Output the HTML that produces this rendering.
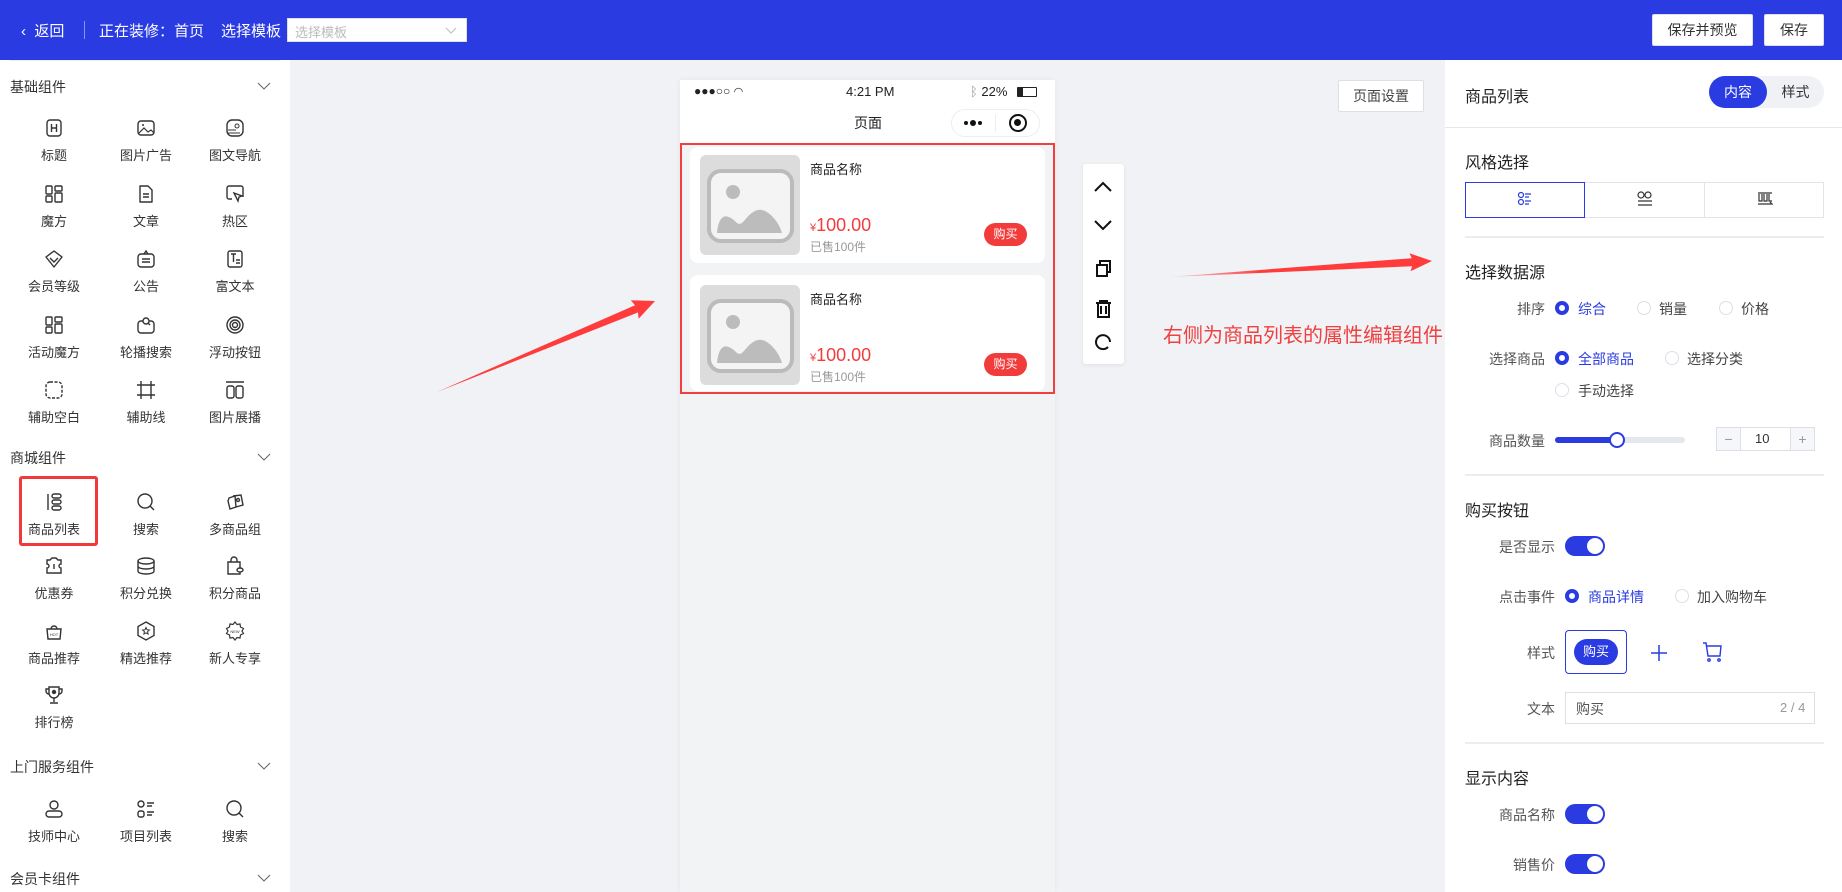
<!DOCTYPE html>
<html><head><meta charset="utf-8">
<style>
*{box-sizing:border-box;margin:0;padding:0}
body{width:1842px;height:892px;overflow:hidden;position:relative;background:#f0f2f5;font-family:"Liberation Sans","Noto Sans CJK SC",sans-serif;color:#333;font-size:14px}
.a{position:absolute}
.hdr{left:0;top:0;width:1842px;height:60px;background:#2a3be2;color:#fff}
.btn{background:#fff;border:1px solid #dcdfe6;border-radius:2px;color:#333;font-size:14px;text-align:center}
.side{left:0;top:60px;width:290px;height:832px;background:#fff}
.it{width:90px;text-align:center;font-size:13px;color:#333}
.it svg{display:block;margin:0 auto 7px}
.sec{left:10px;font-size:14px;color:#333}
.chev{left:257px;width:14px;height:8px}
.right{left:1445px;top:60px;width:397px;height:832px;background:#fff}
.lbl{font-size:14px;color:#555;text-align:right;width:90px}
.rad{width:14px;height:14px;border-radius:50%;border:1px solid #dcdfe6;background:#fff}
.rad.on{border:4px solid #2a3be2}
.tg{width:40px;height:20px;border-radius:10px;background:#2a3be2}
.tg:after{content:"";position:absolute;right:2px;top:2px;width:16px;height:16px;border-radius:50%;background:#fff}
.hr{height:2px;background:#ebedf0;left:1465px;width:359px}
.h3{font-size:16px;color:#222;left:1465px}
</style></head><body>
<div class="a hdr">
 <div class="a" style="left:21px;top:20px;font-size:15px">&#x2039;&nbsp; 返回</div>
 <div class="a" style="left:84px;top:21px;width:1px;height:18px;background:#8a95ee"></div>
 <div class="a" style="left:99px;top:20px;font-size:15px">正在装修：首页</div>
 <div class="a" style="left:221px;top:20px;font-size:15px">选择模板</div>
 <div class="a" style="left:287px;top:18px;width:180px;height:24px;background:#fff;border:1px solid #dcdfe6"><span class="a" style="left:7px;top:3px;font-size:13px;color:#bbb">选择模板</span><svg class="a" style="left:157px;top:8px" width="12" height="8"><path d="M1 1l5 5 5-5" stroke="#bbb" fill="none"/></svg></div>
 <div class="a btn" style="left:1652px;top:14px;width:101px;height:32px;line-height:30px">保存并预览</div>
 <div class="a btn" style="left:1764px;top:14px;width:60px;height:32px;line-height:30px">保存</div>
</div>

<div class="a side"></div>
<div class="a" style="left:10px;top:60px;width:270px;height:1px;background:#eee"></div>
<div class="a sec" style="top:77px">基础组件</div>
<svg class="a chev" style="top:82px" width="14" height="8"><path d="M1 1l6 6 6-6" stroke="#666" fill="none"/></svg>
<div class="a sec" style="top:448px">商城组件</div>
<svg class="a chev" style="top:453px" width="14" height="8"><path d="M1 1l6 6 6-6" stroke="#666" fill="none"/></svg>
<div class="a sec" style="top:757px">上门服务组件</div>
<svg class="a chev" style="top:762px" width="14" height="8"><path d="M1 1l6 6 6-6" stroke="#666" fill="none"/></svg>
<div class="a sec" style="top:869px">会员卡组件</div>
<svg class="a chev" style="top:874px" width="14" height="8"><path d="M1 1l6 6 6-6" stroke="#666" fill="none"/></svg>

<div class="a it" style="left:9px;top:118px"><svg width="20" height="20"><rect x="3" y="2" width="14" height="16" rx="3" stroke="#333" fill="none" stroke-width="1.4"/><path d="M7.5 6v8M12.5 6v8M7.5 10h5" stroke="#333" stroke-width="1.4"/></svg>标题</div>
<div class="a it" style="left:101px;top:118px"><svg width="20" height="20"><rect x="2" y="3" width="16" height="14" rx="3" stroke="#333" fill="none" stroke-width="1.4"/><path d="M3 15l5-5 4 4 3-2 3 3" stroke="#333" fill="none" stroke-width="1.2"/><circle cx="7" cy="7" r="1" fill="#333"/></svg>图片广告</div>
<div class="a it" style="left:190px;top:118px"><svg width="20" height="20"><rect x="2" y="2" width="16" height="16" rx="5" stroke="#333" fill="none" stroke-width="1.4"/><circle cx="12" cy="8" r="2" stroke="#333" fill="none"/><path d="M3 12h8M3 15h12" stroke="#333"/></svg>图文导航</div>
<div class="a it" style="left:9px;top:184px"><svg width="20" height="20" fill="none" stroke="#333" stroke-width="1.4"><rect x="2" y="2" width="6" height="8" rx="1"/><rect x="11" y="2" width="7" height="5" rx="1"/><rect x="2" y="12" width="6" height="6" rx="1"/><rect x="11" y="9" width="7" height="9" rx="1"/></svg>魔方</div>
<div class="a it" style="left:101px;top:184px"><svg width="20" height="20" fill="none" stroke="#333" stroke-width="1.4"><path d="M4 2h8l4 4v12H4z" stroke-linejoin="round"/><path d="M7 10h6M7 13h6"/></svg>文章</div>
<div class="a it" style="left:190px;top:184px"><svg width="20" height="20" fill="none" stroke="#333" stroke-width="1.4"><path d="M7 15H4a2 2 0 01-2-2V4a2 2 0 012-2h12a2 2 0 012 2v9"/><path d="M9 9l8 3-3 1-1 4z"/></svg>热区</div>
<div class="a it" style="left:9px;top:249px"><svg width="20" height="20" fill="none" stroke="#333" stroke-width="1.4"><path d="M10 2l8 6-8 10-8-10z" stroke-linejoin="round"/><path d="M6 9l4 4 4-4"/></svg>会员等级</div>
<div class="a it" style="left:101px;top:249px"><svg width="20" height="20" fill="none" stroke="#333" stroke-width="1.4"><rect x="2" y="5" width="16" height="13" rx="3"/><path d="M8 5l2-3 2 3M6 10h8M6 13h8"/></svg>公告</div>
<div class="a it" style="left:190px;top:249px"><svg width="20" height="20" fill="none" stroke="#333" stroke-width="1.4"><rect x="3" y="2" width="14" height="16" rx="2"/><path d="M6 5h5M8.5 5v8M11 11h4M11 14h4"/></svg>富文本</div>
<div class="a it" style="left:9px;top:315px"><svg width="20" height="20" fill="none" stroke="#333" stroke-width="1.4"><rect x="2" y="2" width="6" height="8" rx="1"/><rect x="11" y="2" width="7" height="5" rx="1"/><rect x="2" y="12" width="6" height="6" rx="1"/><rect x="11" y="9" width="7" height="9" rx="1"/></svg>活动魔方</div>
<div class="a it" style="left:101px;top:315px"><svg width="20" height="20" fill="none" stroke="#333" stroke-width="1.4"><rect x="2" y="6" width="16" height="12" rx="3"/><circle cx="10" cy="6" r="3" fill="#fff"/><path d="M12 8l2 2"/></svg>轮播搜索</div>
<div class="a it" style="left:190px;top:315px"><svg width="20" height="20" fill="none" stroke="#333" stroke-width="1.4"><circle cx="10" cy="10" r="8"/><circle cx="10" cy="10" r="5"/><circle cx="10" cy="10" r="2.5"/></svg>浮动按钮</div>
<div class="a it" style="left:9px;top:380px"><svg width="20" height="20" fill="none" stroke="#333" stroke-width="1.4" stroke-dasharray="3 1.5"><rect x="2" y="2" width="16" height="16" rx="4"/></svg>辅助空白</div>
<div class="a it" style="left:101px;top:380px"><svg width="20" height="20" fill="none" stroke="#333" stroke-width="1.4"><path d="M5 1v18M15 1v18M1 5h18M1 15h18"/></svg>辅助线</div>
<div class="a it" style="left:190px;top:380px"><svg width="20" height="20" fill="none" stroke="#333" stroke-width="1.4"><path d="M1 2h18"/><rect x="2" y="6" width="7" height="12" rx="2"/><rect x="11" y="6" width="7" height="12" rx="2"/></svg>图片展播</div>

<div class="a" style="left:19px;top:476px;width:79px;height:70px;border:3px solid #f03a3a;border-radius:3px"></div>
<div class="a it" style="left:9px;top:492px"><svg width="20" height="20" fill="none" stroke="#333" stroke-width="1.4"><path d="M4 2v16"/><rect x="8" y="2" width="9" height="4" rx="2"/><rect x="8" y="8" width="9" height="4" rx="2"/><rect x="8" y="14" width="9" height="4" rx="2"/></svg>商品列表</div>
<div class="a it" style="left:101px;top:492px"><svg width="20" height="20" fill="none" stroke="#333" stroke-width="1.4"><circle cx="9" cy="9" r="7"/><path d="M14 14l4 4"/></svg>搜索</div>
<div class="a it" style="left:190px;top:492px"><svg width="20" height="20" fill="none" stroke="#333" stroke-width="1.4"><path d="M4 6l6-2 1 11-6 2-2-8z"/><path d="M8 4l8-1 2 10-7 2"/><circle cx="13" cy="8" r="1.5"/></svg>多商品组</div>
<div class="a it" style="left:9px;top:556px"><svg width="20" height="20" fill="none" stroke="#333" stroke-width="1.4"><path d="M3 4h3l2-2h4l2 2h3v4a2 2 0 000 4v5H3v-5a2 2 0 000-4z"/><path d="M10 8v5"/></svg>优惠券</div>
<div class="a it" style="left:101px;top:556px"><svg width="20" height="20" fill="none" stroke="#333" stroke-width="1.4"><ellipse cx="10" cy="5" rx="8" ry="3"/><path d="M2 5v10c0 2 4 3 8 3s8-1 8-3V5M2 10c0 2 4 3 8 3s8-1 8-3"/></svg>积分兑换</div>
<div class="a it" style="left:190px;top:556px"><svg width="20" height="20" fill="none" stroke="#333" stroke-width="1.4"><path d="M3 6h12v12H3z"/><path d="M6 6V4a3 3 0 016 0v2"/><ellipse cx="15" cy="14" rx="3" ry="2" fill="#fff"/></svg>积分商品</div>
<div class="a it" style="left:9px;top:621px"><svg width="20" height="20" fill="none" stroke="#333" stroke-width="1.4"><path d="M3 8h14l-1 10H4z"/><path d="M7 8a3 3 0 016 0"/><text x="10" y="15" font-size="4" text-anchor="middle" fill="#333" stroke="none">HOT</text></svg>商品推荐</div>
<div class="a it" style="left:101px;top:621px"><svg width="20" height="20" fill="none" stroke="#333" stroke-width="1.4"><path d="M10 1l8 4.5v9L10 19l-8-4.5v-9z"/><path d="M10 6.5l1 2.2 2.4.3-1.8 1.6.5 2.4-2.1-1.2-2.1 1.2.5-2.4-1.8-1.6 2.4-.3z" stroke-width="1"/></svg>精选推荐</div>
<div class="a it" style="left:190px;top:621px"><svg width="20" height="20" fill="none" stroke="#333" stroke-width="1.2"><path d="M10 1l2 2.5 3-.5.5 3 3 1.5-1.5 2.5 1.5 2.5-3 1.5-.5 3-3-.5-2 2.5-2-2.5-3 .5-.5-3-3-1.5L3 10 1.5 7.5l3-1.5.5-3 3 .5z"/><text x="10" y="12" font-size="4" text-anchor="middle" fill="#333" stroke="none">NEW</text></svg>新人专享</div>
<div class="a it" style="left:9px;top:685px"><svg width="20" height="20" fill="none" stroke="#333" stroke-width="1.4"><path d="M5 2h10v6a5 5 0 01-10 0z"/><path d="M5 4H2v2a3 3 0 003 3M15 4h3v2a3 3 0 01-3 3M10 13v4M6 18h8"/><circle cx="10" cy="7" r="1.5" fill="#333"/></svg>排行榜</div>

<div class="a it" style="left:9px;top:799px"><svg width="20" height="20" fill="none" stroke="#333" stroke-width="1.4"><circle cx="10" cy="6" r="4"/><rect x="2" y="12" width="16" height="6" rx="3"/></svg>技师中心</div>
<div class="a it" style="left:101px;top:799px"><svg width="20" height="20" fill="none" stroke="#333" stroke-width="1.4"><circle cx="5" cy="5" r="3"/><rect x="2" y="12" width="6" height="6" rx="2"/><path d="M11 4h7M11 7h5M11 13h7M11 16h5"/></svg>项目列表</div>
<div class="a it" style="left:190px;top:799px"><svg width="20" height="20" fill="none" stroke="#333" stroke-width="1.4"><circle cx="9" cy="9" r="7"/><path d="M14 14l4 4"/></svg>搜索</div>

<div class="a btn" style="left:1338px;top:80px;width:86px;height:32px;line-height:30px;font-size:14px;color:#444">页面设置</div>

<div class="a" style="left:680px;top:80px;width:375px;height:812px;background:#f2f3f5;box-shadow:0 0 6px rgba(0,0,0,.06)"></div>
<div class="a" style="left:680px;top:80px;width:375px;height:64px;background:#fff"></div>
<div class="a" style="left:694px;top:84px;font-size:12px;color:#222">●●●○○ <span style="font-size:11px">&#x25E0;</span></div>
<div class="a" style="left:846px;top:84px;font-size:13px;color:#222">4:21 PM</div>
<div class="a" style="left:970px;top:84px;font-size:13px;color:#222"><span style="color:#999">&#x16D2;</span> 22%</div>
<div class="a" style="left:1017px;top:87px;width:20px;height:10px;border:1px solid #222;border-radius:1px"><div style="width:5px;height:8px;background:#222"></div></div>
<div class="a" style="left:854px;top:113px;font-size:14px;color:#222">页面</div>
<div class="a" style="left:951px;top:109px;width:89px;height:28px;border:1px solid #eee;border-radius:14px;background:#fff"></div>
<div class="a" style="left:995px;top:114px;width:1px;height:18px;background:#eee"></div>
<svg class="a" style="left:962px;top:118px" width="24" height="10" fill="#111"><circle cx="4" cy="5" r="2"/><circle cx="11" cy="5" r="3"/><circle cx="18" cy="5" r="2"/></svg>
<div class="a" style="left:1009px;top:114px;width:18px;height:18px;border:2.5px solid #111;border-radius:50%"><div style="width:7px;height:7px;background:#111;border-radius:50%;margin:3px"></div></div>

<div class="a" style="left:680px;top:143px;width:375px;height:251px;border:2px solid #f04040"></div>
<div class="a" style="left:690px;top:147px;width:355px;height:116px;background:#fff;border-radius:8px"></div>
<div class="a" style="left:700px;top:155px;width:100px;height:100px;background:#dcdcdc;border-radius:6px"><svg width="100" height="100"><rect x="9" y="16" width="83" height="70" rx="12" fill="#f4f4f4" stroke="#bbb" stroke-width="4"/><circle cx="33" cy="37" r="7" fill="#bcbcbc"/><path d="M17 78c2-20 10-20 20-10 6 4 8-7 18-12 10-6 24 10 27 22z" fill="#bcbcbc"/></svg></div>
<div class="a" style="left:810px;top:159px;font-size:13px;color:#222">商品名称</div>
<div class="a" style="left:810px;top:215px;font-size:18px;color:#f23c3c"><span style="font-size:11px">¥</span>100.00</div>
<div class="a" style="left:810px;top:238px;font-size:12px;color:#999">已售100件</div>
<div class="a" style="left:984px;top:223px;width:43px;height:23px;border-radius:12px;background:#f23c3c;color:#fff;font-size:12px;text-align:center;line-height:23px">购买</div>
<div class="a" style="left:690px;top:275px;width:355px;height:116px;background:#fff;border-radius:8px"></div>
<div class="a" style="left:700px;top:285px;width:100px;height:100px;background:#dcdcdc;border-radius:6px"><svg width="100" height="100"><rect x="9" y="16" width="83" height="70" rx="12" fill="#f4f4f4" stroke="#bbb" stroke-width="4"/><circle cx="33" cy="37" r="7" fill="#bcbcbc"/><path d="M17 78c2-20 10-20 20-10 6 4 8-7 18-12 10-6 24 10 27 22z" fill="#bcbcbc"/></svg></div>
<div class="a" style="left:810px;top:289px;font-size:13px;color:#222">商品名称</div>
<div class="a" style="left:810px;top:345px;font-size:18px;color:#f23c3c"><span style="font-size:11px">¥</span>100.00</div>
<div class="a" style="left:810px;top:368px;font-size:12px;color:#999">已售100件</div>
<div class="a" style="left:984px;top:353px;width:43px;height:23px;border-radius:12px;background:#f23c3c;color:#fff;font-size:12px;text-align:center;line-height:23px">购买</div>

<div class="a" style="left:1083px;top:164px;width:41px;height:200px;background:#fff;border-radius:3px;box-shadow:0 1px 4px rgba(0,0,0,.08)">
<svg width="41" height="200" fill="none" stroke="#111" stroke-width="2"><path d="M12 27l8-8 8 8M12 57l8 8 8-8"/><rect x="14" y="101" width="10" height="11"/><path d="M17 101v-4h10v11h-3"/><path d="M13 139h15M15 139v14h11v-14M18 142v8M23 142v8M17 139v-2h7v2"/><path d="M27 178a7 7 0 10-2 5" /></svg></div>

<svg class="a" style="left:0;top:0" width="1842" height="892"><defs><linearGradient id="g1" x1="0" x2="1"><stop offset="0" stop-color="#ff4040" stop-opacity=".15"/><stop offset=".35" stop-color="#ff3b3b"/></linearGradient></defs>
<path d="M437 392L638 312.4 638.6 318.7 655 301 630.8 300.3 635 305.2z" fill="#ff3b3b"/>
<path d="M1169 277L1412.2 266.2 1410.5 271.3 1432 261 1409.5 253.3 1411.8 258.2z" fill="url(#g1)"/></svg>
<div class="a" style="left:1163px;top:319px;font-size:20px;color:#f04040;white-space:nowrap">右侧为商品列表的属性编辑组件</div>

<div class="a right"></div>
<div class="a" style="left:1465px;top:83px;font-size:16px;color:#222">商品列表</div>
<div class="a" style="left:1709px;top:76px;width:115px;height:32px;border-radius:16px;background:#f0f1f4"></div>
<div class="a" style="left:1709px;top:76px;width:58px;height:32px;border-radius:16px;background:#2a3be2;color:#fff;font-size:14px;text-align:center;line-height:32px">内容</div>
<div class="a" style="left:1767px;top:76px;width:57px;height:32px;font-size:14px;text-align:center;line-height:32px;color:#333">样式</div>
<div class="a" style="left:1445px;top:127px;width:397px;height:1px;background:#e8e8e8"></div>

<div class="a h3" style="top:149px">风格选择</div>
<div class="a" style="left:1465px;top:182px;width:359px;height:36px;border:1px solid #e5e5e5"></div>
<div class="a" style="left:1584px;top:182px;width:1px;height:36px;background:#e5e5e5"></div>
<div class="a" style="left:1704px;top:182px;width:1px;height:36px;background:#e5e5e5"></div>
<div class="a" style="left:1465px;top:182px;width:120px;height:36px;border:1px solid #2a3be2"></div>
<svg class="a" style="left:1517px;top:191px" width="16" height="16" fill="none" stroke="#2a3be2" stroke-width="1.2"><circle cx="4" cy="4" r="2.5"/><circle cx="4" cy="11" r="2.5"/><path d="M8 3h6M8 6h4M8 10h6M8 13h4"/></svg>
<svg class="a" style="left:1637px;top:191px" width="16" height="16" fill="none" stroke="#333" stroke-width="1.2"><circle cx="4" cy="4" r="3"/><circle cx="11" cy="4" r="3"/><path d="M1 10h14M1 14h14"/></svg>
<svg class="a" style="left:1757px;top:191px" width="16" height="16" fill="none" stroke="#333" stroke-width="1.2"><path d="M1 2h14M2 3v7h3V3M7 3v7h3V3M12 3v7h3M1 13h14l-2-2"/></svg>
<div class="a hr" style="top:236px"></div>

<div class="a h3" style="top:259px">选择数据源</div>
<div class="a lbl" style="left:1455px;top:299px">排序</div>
<div class="a rad on" style="left:1555px;top:301px"></div><div class="a" style="left:1578px;top:299px;color:#2a3be2">综合</div>
<div class="a rad" style="left:1637px;top:301px"></div><div class="a" style="left:1659px;top:299px;color:#444">销量</div>
<div class="a rad" style="left:1719px;top:301px"></div><div class="a" style="left:1741px;top:299px;color:#444">价格</div>
<div class="a lbl" style="left:1455px;top:349px">选择商品</div>
<div class="a rad on" style="left:1555px;top:351px"></div><div class="a" style="left:1578px;top:349px;color:#2a3be2">全部商品</div>
<div class="a rad" style="left:1665px;top:351px"></div><div class="a" style="left:1687px;top:349px;color:#444">选择分类</div>
<div class="a rad" style="left:1555px;top:383px"></div><div class="a" style="left:1578px;top:381px;color:#444">手动选择</div>
<div class="a lbl" style="left:1455px;top:431px">商品数量</div>
<div class="a" style="left:1555px;top:437px;width:130px;height:6px;border-radius:3px;background:#e4e7ed"></div>
<div class="a" style="left:1555px;top:437px;width:62px;height:6px;border-radius:3px;background:#2a3be2"></div>
<div class="a" style="left:1609px;top:432px;width:16px;height:16px;border-radius:50%;background:#fff;border:2px solid #2a3be2"></div>
<div class="a" style="left:1716px;top:427px;width:99px;height:24px;border:1px solid #dcdfe6;background:#fff"></div>
<div class="a" style="left:1716px;top:427px;width:25px;height:24px;background:#f5f7fa;border:1px solid #dcdfe6;color:#999;text-align:center;line-height:22px">−</div>
<div class="a" style="left:1790px;top:427px;width:25px;height:24px;background:#f5f7fa;border:1px solid #dcdfe6;color:#999;text-align:center;line-height:22px">+</div>
<div class="a" style="left:1755px;top:431px;font-size:13px;color:#333">10</div>
<div class="a hr" style="top:474px"></div>

<div class="a h3" style="top:497px">购买按钮</div>
<div class="a lbl" style="left:1465px;top:537px">是否显示</div>
<div class="a tg" style="left:1565px;top:536px"></div>
<div class="a lbl" style="left:1465px;top:587px">点击事件</div>
<div class="a rad on" style="left:1565px;top:589px"></div><div class="a" style="left:1588px;top:587px;color:#2a3be2">商品详情</div>
<div class="a rad" style="left:1675px;top:589px"></div><div class="a" style="left:1697px;top:587px;color:#444">加入购物车</div>
<div class="a lbl" style="left:1465px;top:643px">样式</div>
<div class="a" style="left:1565px;top:630px;width:62px;height:44px;border:1px solid #2a3be2;border-radius:4px"></div>
<div class="a" style="left:1574px;top:639px;width:44px;height:26px;border-radius:13px;background:#2a3be2;color:#fff;font-size:13px;text-align:center;line-height:26px">购买</div>
<svg class="a" style="left:1649px;top:643px" width="20" height="20" stroke="#2a3be2" stroke-width="1.5"><path d="M10 2v16M2 10h16"/></svg>
<svg class="a" style="left:1702px;top:641px" width="22" height="22" fill="none" stroke="#2a3be2" stroke-width="1.4"><path d="M1 2h3l2 13h12l1-10H5"/><circle cx="7" cy="19" r="1.2"/><circle cx="17" cy="19" r="1.2"/></svg>
<div class="a lbl" style="left:1465px;top:699px">文本</div>
<div class="a" style="left:1565px;top:692px;width:250px;height:32px;border:1px solid #dcdfe6"></div>
<div class="a" style="left:1576px;top:699px;color:#555">购买</div>
<div class="a" style="left:1780px;top:700px;color:#999;font-size:13px">2 / 4</div>
<div class="a hr" style="top:742px"></div>

<div class="a h3" style="top:765px">显示内容</div>
<div class="a lbl" style="left:1465px;top:805px">商品名称</div>
<div class="a tg" style="left:1565px;top:804px"></div>
<div class="a lbl" style="left:1465px;top:855px">销售价</div>
<div class="a tg" style="left:1565px;top:854px"></div>
</body></html>
